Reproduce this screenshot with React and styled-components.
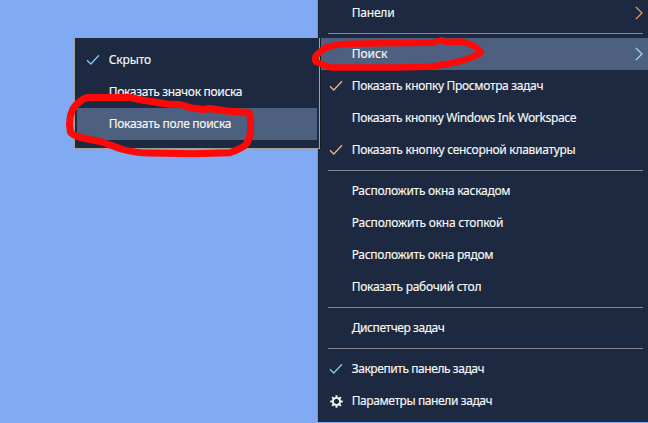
import React from "react";
import styled, { createGlobalStyle } from "styled-components";

const GlobalStyle = createGlobalStyle`
  * {
    box-sizing: border-box;
  }

  body {
    margin: 0;
    overflow: hidden;
  }
`;

const Desktop = styled.main`
  position: relative;
  display: flex;
  justify-content: flex-end;
  width: 648px;
  height: 423px;
  overflow: hidden;
  background: #80aaf2;
  font-family: "Noto Sans", "Open Sans", sans-serif;
  font-size: 12px;
  color: #f8f8f6;
`;

const Menu = styled.nav`
  display: flex;
  flex-direction: column;
  justify-content: flex-end;
  width: 331px;
  height: 422px;
  padding-bottom: 5px;
  border-left: 1px solid #8295b5;
  background: #1c2941;
`;

const Submenu = styled.nav`
  position: absolute;
  left: 74px;
  top: 38px;
  width: 246px;
  height: 111px;
  padding: 6px 2px 0;
  border: solid #a2a09d;
  border-width: 0 1px 1px;
  background: #1c2941;
  box-shadow: 1px 0 0 #151a24;
`;

const Item = styled.div`
  display: flex;
  flex: none;
  align-items: center;
  height: 32px;
  padding-right: 5px;
  background: ${({ $active }) => ($active ? "#4d6080" : "transparent")};
`;

const IconSlot = styled.span`
  display: flex;
  flex: none;
  justify-content: center;
  width: ${({ $sub }) => ($sub ? "31px" : "33px")};
  padding-left: ${({ $sub }) => ($sub ? "0" : "3px")};
`;

const Label = styled.span`
  flex: 1;
  padding-left: 0.7px;
  line-height: 16px;
  white-space: nowrap;
  letter-spacing: ${({ $track }) => $track || 0}px;
  -webkit-text-stroke: 0.15px #f8f8f6;
`;

const Separator = styled.hr`
  flex: none;
  width: 315px;
  height: 1px;
  margin: 4px 0 4px 10px;
  border: 0;
  background: #858789;
`;

const Marker = styled.svg`
  position: absolute;
  inset: 0;
  fill: none;
  stroke: #fe0808;
  stroke-linecap: round;
  stroke-linejoin: round;
  pointer-events: none;
`;

const Check = ({ color = "#e9b878" }) => (
  <svg width="14" height="12" viewBox="0 0 14 12" fill="none">
    <path d="M1 6.2 4.8 10 13 1.3" stroke={color} strokeWidth="1.3" />
  </svg>
);

const Chevron = ({ color }) => (
  <svg width="8" height="14" viewBox="0 0 8 14" fill="none">
    <path d="m.8.8 6.2 6.2-6.2 6.2" stroke={color} strokeWidth="1.2" />
  </svg>
);

const teeth = [0, 45, 90, 135, 180, 225, 270, 315];

const Gear = () => (
  <svg width="13" height="13" viewBox="-6.5 -6.5 13 13" fill="none" stroke="#f4f4f2">
    <circle r="3.6" strokeWidth="1.9" />
    {teeth.map((angle) => (
      <path key={angle} d="M0-4V-6.2" strokeWidth="2" transform={`rotate(${angle})`} />
    ))}
  </svg>
);

const MenuItem = ({ icon, arrow, active, sub, track, children }) => (
  <Item $active={active}>
    <IconSlot $sub={sub}>{icon}</IconSlot>
    <Label $track={track}>{children}</Label>
    {arrow && <Chevron color={arrow} />}
  </Item>
);

const App = () => (
  <>
    <GlobalStyle />
    <Desktop>
      <Menu>
        <MenuItem arrow="#eea567" track={-0.2}>Панели</MenuItem>
        <Separator />
        <MenuItem active arrow="#a9dfe8">Поиск</MenuItem>
        <MenuItem icon={<Check />} track={-0.33}>Показать кнопку Просмотра задач</MenuItem>
        <MenuItem track={-0.35}>Показать кнопку Windows Ink Workspace</MenuItem>
        <MenuItem icon={<Check />} track={-0.29}>Показать кнопку сенсорной клавиатуры</MenuItem>
        <Separator />
        <MenuItem track={-0.28}>Расположить окна каскадом</MenuItem>
        <MenuItem track={-0.22}>Расположить окна стопкой</MenuItem>
        <MenuItem track={-0.3}>Расположить окна рядом</MenuItem>
        <MenuItem track={-0.27}>Показать рабочий стол</MenuItem>
        <Separator />
        <MenuItem track={-0.42}>Диспетчер задач</MenuItem>
        <Separator />
        <MenuItem icon={<Check color="#82caf5" />} track={-0.43}>Закрепить панель задач</MenuItem>
        <MenuItem icon={<Gear />} track={-0.4}>Параметры панели задач</MenuItem>
      </Menu>

      <Submenu>
        <MenuItem sub icon={<Check color="#82caf5" />} track={-0.1}>Скрыто</MenuItem>
        <MenuItem sub track={-0.32}>Показать значок поиска</MenuItem>
        <MenuItem sub active track={-0.28}>Показать поле поиска</MenuItem>
      </Submenu>

      {/* hand-drawn marker loops */}
      <Marker width="648" height="423" viewBox="0 0 648 423">
        <path
          strokeWidth="6.5"
          d="M315 60C315 56 317 54 320 52C323 49 326 47 330 46.5C337 44.5 344 44 351 43.8L383 43.3L432 42.7L442 40.2L446 42L460 41.5C466 42 470 44 474 46C477 48 480 50 481 52.5C478 55 473 57 467 59C461 61 454 63 447 64L430 66.8L395 67.5L332 67.5C327 67 323 64 316 62Z"
        />
        <path
          strokeWidth="7"
          d="M88 97.5H130L142 100L153 101.7L167 104L180 104.5L192 108L203 109.5L210 108.5L227 111L249 112.5L250.5 119V132C250 138 248 142 245 145.5C240 149 235 151 230 152.7L193 153.8L150 153C141 153 132 152 123 149.5C115 147 108 144 100 141.5L80 137.5C77 136 72 135 70.5 132C70 128 69 125 69.7 121C70 116 71 113 72.5 110C74 106 77 104 80 101.5C82 99 85 98 88 97.5Z"
        />
      </Marker>
    </Desktop>
  </>
);

export default App;
